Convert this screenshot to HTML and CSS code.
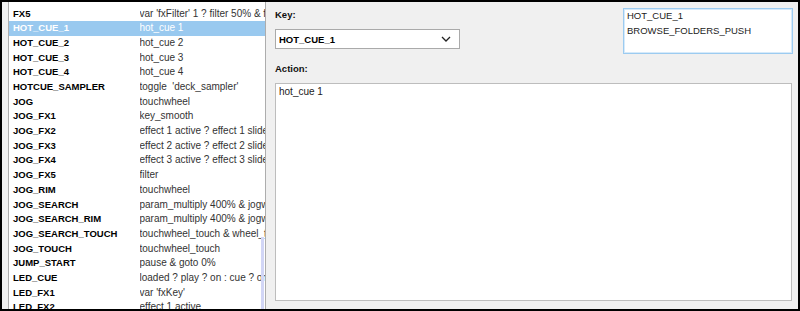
FILE: index.html
```html
<!DOCTYPE html>
<html>
<head>
<meta charset="utf-8">
<link rel="stylesheet" href="styles.css">
</head>
<body>
<div class="frame">
  <div class="list">
    <div class="rows">
      <div class="row"><span class="k">FX5</span><span class="a">var 'fxFilter' 1 ? filter 50% &amp; filter 50%</span></div>
      <div class="row sel"><span class="k">HOT_CUE_1</span><span class="a">hot_cue 1</span></div>
      <div class="row"><span class="k">HOT_CUE_2</span><span class="a">hot_cue 2</span></div>
      <div class="row"><span class="k">HOT_CUE_3</span><span class="a">hot_cue 3</span></div>
      <div class="row"><span class="k">HOT_CUE_4</span><span class="a">hot_cue 4</span></div>
      <div class="row"><span class="k">HOTCUE_SAMPLER</span><span class="a">toggle &nbsp;'deck_sampler'</span></div>
      <div class="row"><span class="k">JOG</span><span class="a">touchwheel</span></div>
      <div class="row"><span class="k">JOG_FX1</span><span class="a">key_smooth</span></div>
      <div class="row"><span class="k">JOG_FX2</span><span class="a">effect 1 active ? effect 1 slider</span></div>
      <div class="row"><span class="k">JOG_FX3</span><span class="a">effect 2 active ? effect 2 slider</span></div>
      <div class="row"><span class="k">JOG_FX4</span><span class="a">effect 3 active ? effect 3 slider</span></div>
      <div class="row"><span class="k">JOG_FX5</span><span class="a">filter</span></div>
      <div class="row"><span class="k">JOG_RIM</span><span class="a">touchwheel</span></div>
      <div class="row"><span class="k">JOG_SEARCH</span><span class="a">param_multiply 400% &amp; jogwheel</span></div>
      <div class="row"><span class="k">JOG_SEARCH_RIM</span><span class="a">param_multiply 400% &amp; jogwheel</span></div>
      <div class="row"><span class="k">JOG_SEARCH_TOUCH</span><span class="a">touchwheel_touch &amp; wheel_touch</span></div>
      <div class="row"><span class="k">JOG_TOUCH</span><span class="a">touchwheel_touch</span></div>
      <div class="row"><span class="k">JUMP_START</span><span class="a">pause &amp; goto 0%</span></div>
      <div class="row"><span class="k">LED_CUE</span><span class="a">loaded ? play ? on : cue ? on : off</span></div>
      <div class="row"><span class="k">LED_FX1</span><span class="a">var 'fxKey'</span></div>
      <div class="row"><span class="k">LED_FX2</span><span class="a">effect 1 active</span></div>
    </div>
    <div class="thumb"></div>
  </div>
  <div class="panel">
    <div class="top">
      <div class="keycol">
        <div class="label">Key:</div>
        <div class="combo">
          <span class="combo-text">HOT_CUE_1</span>
          <svg class="chev" width="10" height="6" viewBox="0 0 10 6"><polyline points="1,1 5,5 9,1" fill="none" stroke="#222" stroke-width="1.3"/></svg>
        </div>
      </div>
      <div class="keys">
        <div>HOT_CUE_1</div>
        <div>BROWSE_FOLDERS_PUSH</div>
      </div>
    </div>
    <div class="label action-label">Action:</div>
    <div class="action">hot_cue 1</div>
  </div>
</div>
</body>
</html>
```

FILE: styles.css
```css
html, body {
  margin: 0;
  padding: 0;
}
body {
  width: 800px;
  height: 311px;
  overflow: hidden;
  font-family: "Liberation Sans", Arial, sans-serif;
}
.frame {
  box-sizing: border-box;
  width: 800px;
  height: 311px;
  border: 2px solid #000;
  background: #f0f0f0;
  display: flex;
  padding-left: 6px;
  overflow: hidden;
}
.list {
  position: relative;
  width: 258px;
  flex: none;
  box-sizing: border-box;
  border-left: 1px solid #adadad;
  border-right: 1px solid #adadad;
  background: #fff;
  overflow: hidden;
}
.rows {
  padding-top: 4.6px;
}
.row {
  display: grid;
  grid-template-columns: 126.5px 1fr;
  height: 14.7px;
  line-height: 14.7px;
  padding-left: 4px;
  white-space: nowrap;
  overflow: hidden;
}
.k {
  font-weight: bold;
  font-size: 9.5px;
  color: #000;
}
.a {
  font-size: 10px;
  color: #333;
  overflow: hidden;
}
.row.sel {
  background: #99c9ef;
}
.row.sel .k, .row.sel .a {
  color: #fff;
}
.thumb {
  position: absolute;
  right: 1px;
  top: 235px;
  bottom: 0;
  width: 3px;
  background: #d2d6f6;
}
.panel {
  flex: 1;
  display: flex;
  flex-direction: column;
  padding: 6px 5px 8px 9px;
  min-width: 0;
}
.top {
  display: flex;
  justify-content: space-between;
  height: 46px;
}
.label {
  font-weight: bold;
  font-size: 9.5px;
  line-height: 14px;
  color: #111;
}
.combo {
  box-sizing: border-box;
  margin-top: 7px;
  width: 185px;
  height: 20px;
  background: #fff;
  border: 1px solid #aaa;
  display: flex;
  align-items: center;
  justify-content: space-between;
  padding: 0 8px 0 3px;
}
.combo-text {
  font-weight: bold;
  font-size: 9.5px;
  color: #000;
}
.chev {
  display: block;
}
.keys {
  box-sizing: border-box;
  width: 170px;
  height: 46px;
  background: #fff;
  border: 1px solid #9ccbf0;
  box-shadow: inset 0 0 0 1px #d6eafa;
  padding: 0 3px;
  font-size: 9.5px;
  line-height: 14.5px;
  color: #222;
}
.action-label {
  margin-top: 8px;
  margin-bottom: 7px;
}
.action {
  flex: 1;
  box-sizing: border-box;
  width: 517px;
  background: #fff;
  border: 1px solid #bdbdbd;
  padding: 1px 3px;
  font-size: 10px;
  line-height: 13px;
  color: #222;
}
```
